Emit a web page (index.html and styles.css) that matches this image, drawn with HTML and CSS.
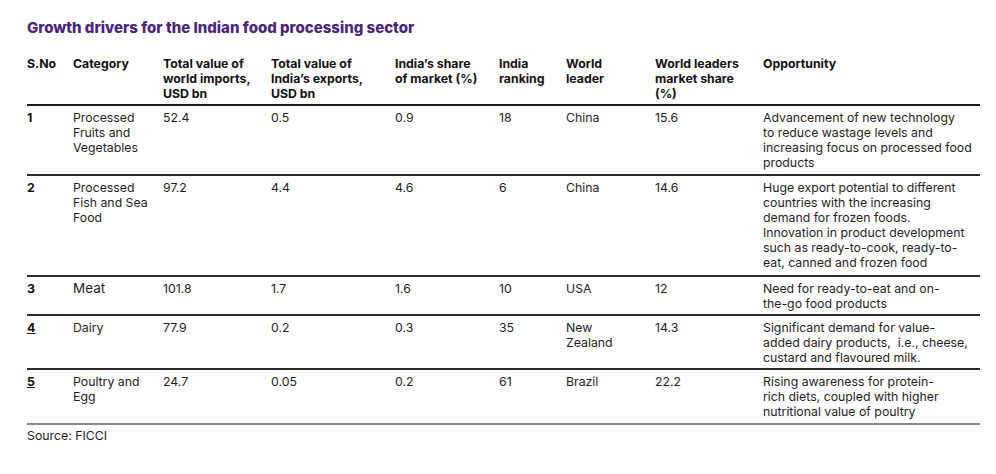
FILE: index.html
```html
<!DOCTYPE html>
<html lang="en">
<head>
<meta charset="utf-8">
<title>Growth drivers for the Indian food processing sector</title>
<link rel="stylesheet" href="styles.css">
</head>
<body>
<div class="page">
  <h1 class="title">Growth drivers for the Indian food processing sector</h1>
  <table class="data">
    <colgroup>
      <col class="c1"><col class="c2"><col class="c3"><col class="c4"><col class="c5"><col class="c6"><col class="c7"><col class="c8"><col class="c9">
    </colgroup>
    <thead>
      <tr>
        <th>S.No</th>
        <th>Category</th>
        <th>Total value of<br>world imports,<br>USD bn</th>
        <th>Total value of<br>India’s exports,<br>USD bn</th>
        <th>India’s share<br>of market (%)</th>
        <th>India<br>ranking</th>
        <th>World<br>leader</th>
        <th>World leaders<br>market share<br>(%)</th>
        <th>Opportunity</th>
      </tr>
    </thead>
    <tbody>
      <tr>
        <td class="num">1</td>
        <td>Processed<br>Fruits and<br>Vegetables</td>
        <td>52.4</td>
        <td>0.5</td>
        <td>0.9</td>
        <td>18</td>
        <td>China</td>
        <td>15.6</td>
        <td>Advancement of new technology<br>to reduce wastage levels and<br>increasing focus on processed food<br>products</td>
      </tr>
      <tr class="tall">
        <td class="num">2</td>
        <td>Processed<br>Fish and Sea<br>Food</td>
        <td>97.2</td>
        <td>4.4</td>
        <td>4.6</td>
        <td>6</td>
        <td>China</td>
        <td>14.6</td>
        <td>Huge export potential to different<br>countries with the increasing<br>demand for frozen foods.<br>Innovation in product development<br>such as ready-to-cook, ready-to-<br>eat, canned and frozen food</td>
      </tr>
      <tr class="short">
        <td class="num">3</td>
        <td class="big">Meat</td>
        <td>101.8</td>
        <td>1.7</td>
        <td>1.6</td>
        <td>10</td>
        <td>USA</td>
        <td>12</td>
        <td>Need for ready-to-eat and on-<br>the-go food products</td>
      </tr>
      <tr class="short">
        <td class="num u">4</td>
        <td>Dairy</td>
        <td>77.9</td>
        <td>0.2</td>
        <td>0.3</td>
        <td>35</td>
        <td>New<br>Zealand</td>
        <td>14.3</td>
        <td>Significant demand for value-<br>added dairy products,&nbsp; i.e., cheese,<br>custard and flavoured milk.</td>
      </tr>
      <tr class="last">
        <td class="num u">5</td>
        <td>Poultry and<br>Egg</td>
        <td>24.7</td>
        <td>0.05</td>
        <td>0.2</td>
        <td>61</td>
        <td>Brazil</td>
        <td>22.2</td>
        <td>Rising awareness for protein-<br>rich diets, coupled with higher<br>nutritional value of poultry</td>
      </tr>
    </tbody>
  </table>
  <p class="source">Source: FICCI</p>
</div>
</body>
</html>
```
FILE: styles.css
```css
html, body {
  margin: 0;
  padding: 0;
  background: #ffffff;
}
body {
  font-family: "Inter", "Liberation Sans", sans-serif;
  color: #1e1e1e;
}
.page {
  padding: 18px 16px 0 27px;
}
.title {
  margin: 0;
  font-size: 15px;
  line-height: 20px;
  font-weight: 800;
  color: #4a2578;
}
.data {
  margin-top: 18px;
  border-collapse: collapse;
  table-layout: fixed;
  width: 953px;
  font-size: 12.3px;
  line-height: 15px;
  white-space: nowrap;
}
.c1 { width: 46px; }
.c2 { width: 90px; }
.c3 { width: 108px; }
.c4 { width: 124px; }
.c5 { width: 104px; }
.c6 { width: 67px; }
.c7 { width: 89px; }
.c8 { width: 108px; }
.c9 { width: 217px; }
.data th {
  text-align: left;
  vertical-align: top;
  font-weight: 700;
  color: #111;
  padding: 0 0 3px 0;
  border-bottom: 2px solid #1a1a1a;
}
.data td {
  vertical-align: top;
  padding: 4px 0 4px 0;
  border-bottom: 2px solid #2a2a2a;
}
.data tr.tall td {
  padding-bottom: 5px;
}
.data tr.short td {
  padding-bottom: 3px;
}
.data td.num {
  font-weight: 700;
  color: #111;
}
.data td.u {
  text-decoration: underline;
}
.data td.big {
  font-size: 13.5px;
}
.data tr.last td {
  border-bottom: 2.5px solid #8a8a8a;
  padding-bottom: 4px;
}
.source {
  margin: 3px 0 0 0;
  font-size: 12.3px;
  line-height: 15px;
  color: #1e1e1e;
}
```
